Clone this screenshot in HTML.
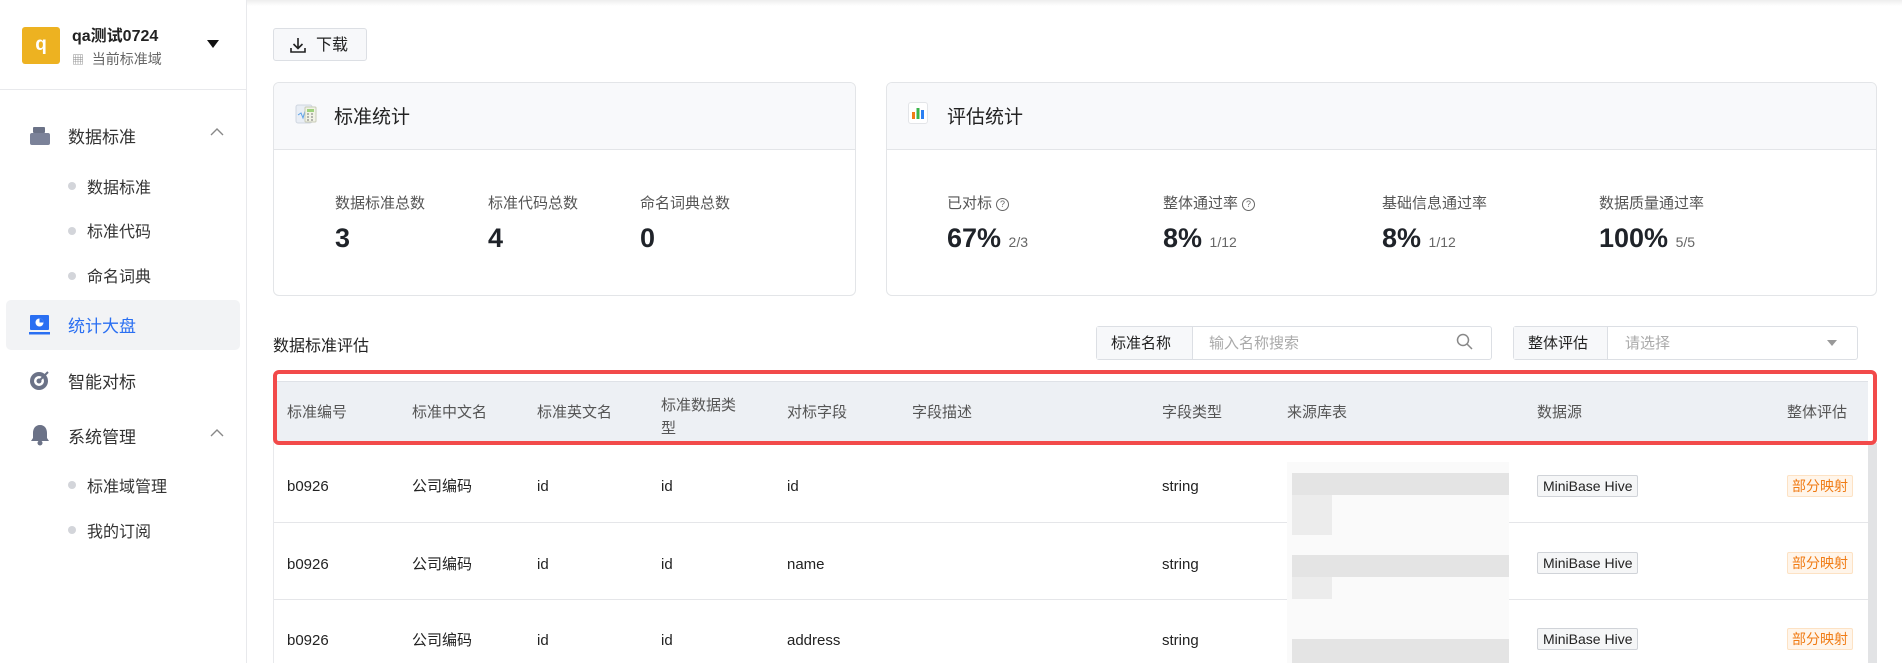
<!DOCTYPE html>
<html><head><meta charset="utf-8"><style>
*{margin:0;padding:0;box-sizing:border-box}
body{width:1902px;height:663px;overflow:hidden;background:#fff;font-family:"Liberation Sans","Noto Sans CJK SC",sans-serif;color:#1f2329;position:relative}
.a{position:absolute;white-space:nowrap}
.side{position:absolute;left:0;top:0;width:247px;height:663px;border-right:1px solid #e8e9ec;background:#fff}
.nav{font-size:17px;color:#333;line-height:20px;margin-top:3px}
.sub{font-size:16px;color:#333;line-height:20px;margin-top:3px}
.dot{position:absolute;width:8px;height:8px;border-radius:50%;background:#d3d5da}
.card{position:absolute;border:1px solid #e3e5e8;border-radius:6px;overflow:hidden;background:#fff}
.card .hd{height:67px;background:#f8f9fb;border-bottom:1px solid #e3e5e8;position:relative}
.lbl{font-size:15px;color:#555;line-height:20px;margin-top:3px}
.num{font-size:27px;font-weight:bold;color:#1f2329;line-height:32px}
.num small{font-size:14px;font-weight:normal;color:#666}
.th{font-size:15px;color:#555;line-height:20px;margin-top:3px}
.td{font-size:15px;color:#222;line-height:20px;margin-top:2px}
.tag{position:absolute;border:1px solid #d0d3d8;background:#f5f6f7;border-radius:2px;font-size:14px;color:#222;padding:0 5px;height:22px;line-height:20px}
.tag2{position:absolute;border:1px solid #fde2c4;background:#fff5ea;border-radius:2px;font-size:14px;color:#f07c15;padding:0 4px;height:22px;line-height:20px}
.q{display:inline-block;width:13px;height:13px;border:1.3px solid #666;border-radius:50%;font-size:9px;line-height:10px;text-align:center;color:#666;vertical-align:1px;margin-left:4px}
</style></head><body>
<div class="a" style="left:0;top:0;width:1902px;height:6px;background:linear-gradient(#eee,#fff)"></div>
<div class="side">
 <div class="a" style="left:22px;top:27px;width:38px;height:37px;background:#edb221;border-radius:3px;color:#fff;font-weight:bold;font-size:19px;text-align:center;line-height:36px">q</div>
 <div class="a" style="left:72px;top:27px;font-size:16px;font-weight:bold;color:#222;line-height:20px">qa测试0724</div>
 <div class="a" style="left:72px;top:49px;font-size:14px;color:#666;line-height:20px"><span style="font-size:12px;color:#888">▦</span>&nbsp; 当前标准域</div>
 <div class="a" style="left:207px;top:40px;width:0;height:0;border-left:6px solid transparent;border-right:6px solid transparent;border-top:8px solid #111"></div>
 <div class="a" style="left:0;top:89px;width:247px;height:1px;background:#e8e9ec"></div>
 <svg class="a" style="left:30px;top:126px" width="20" height="20"><rect x="3" y="1" width="12" height="6" rx="1" fill="#6b7287"/><rect x="0" y="7" width="20" height="12" rx="2" fill="#7b8299"/></svg>
 <div class="a nav" style="left:68px;top:125px">数据标准</div>
 <svg class="a" style="left:210px;top:127px" width="14" height="10"><path d="M1 8 L7 2 L13 8" fill="none" stroke="#888" stroke-width="1.4"/></svg>
 <div class="dot" style="left:68px;top:182px"></div><div class="a sub" style="left:87px;top:176px">数据标准</div>
 <div class="dot" style="left:68px;top:227px"></div><div class="a sub" style="left:87px;top:220px">标准代码</div>
 <div class="dot" style="left:68px;top:272px"></div><div class="a sub" style="left:87px;top:265px">命名词典</div>
 <div class="a" style="left:6px;top:300px;width:234px;height:50px;background:#f2f3f5;border-radius:5px"></div>
 <svg class="a" style="left:29px;top:315px" width="22" height="20"><rect x="1" y="0" width="19" height="15" rx="1" fill="#2a6ff2"/><rect x="0" y="17" width="21" height="2.5" fill="#2a6ff2"/><circle cx="10.5" cy="7.5" r="4" fill="#fff"/><path d="M10.5 7.5 V3.5 A4 4 0 0 1 14.5 7.5Z" fill="#2a6ff2"/></svg>
 <div class="a nav" style="left:68px;top:314px;color:#2a6ff2">统计大盘</div>
 <svg class="a" style="left:29px;top:369px" width="22" height="22"><circle cx="10" cy="12" r="9" fill="#6b7287"/><circle cx="10" cy="12" r="5" fill="#fff"/><circle cx="10" cy="12" r="2.5" fill="#6b7287"/><path d="M10 12 L19 3" stroke="#6b7287" stroke-width="2"/></svg>
 <div class="a nav" style="left:68px;top:370px">智能对标</div>
 <svg class="a" style="left:30px;top:424px" width="20" height="22"><path d="M10 1 C5 1 3 5 3 9 V14 L1 17 H19 L17 14 V9 C17 5 15 1 10 1Z" fill="#6b7287"/><circle cx="10" cy="19" r="2.5" fill="#6b7287"/></svg>
 <div class="a nav" style="left:68px;top:425px">系统管理</div>
 <svg class="a" style="left:210px;top:428px" width="14" height="10"><path d="M1 8 L7 2 L13 8" fill="none" stroke="#888" stroke-width="1.4"/></svg>
 <div class="dot" style="left:68px;top:481px"></div><div class="a sub" style="left:87px;top:475px">标准域管理</div>
 <div class="dot" style="left:68px;top:526px"></div><div class="a sub" style="left:87px;top:520px">我的订阅</div>
</div>

<div class="a" style="left:273px;top:28px;width:94px;height:33px;border:1px solid #dcdfe4;border-radius:3px;background:#f7f8fa"></div>
<svg class="a" style="left:290px;top:37px" width="16" height="16"><path d="M8 1 V11 M3.5 7 L8 11.5 L12.5 7 M1 11 V15 H15 V11" fill="none" stroke="#222" stroke-width="1.6"/></svg>
<div class="a" style="left:316px;top:36px;font-size:16px;color:#222;line-height:20px">下载</div>

<div class="card" style="left:273px;top:82px;width:583px;height:214px"><div class="hd"></div></div>
<svg class="a" style="left:295px;top:103px" width="24" height="22"><rect x="1" y="2" width="16" height="18" rx="2" fill="#e9eef5" stroke="#cfd6e0"/><path d="M3 12 L6 10 L8 15 L10 8" fill="none" stroke="#5aa0e8"/><rect x="10" y="4" width="11" height="15" rx="1" fill="#f1f3e6" stroke="#c8cbb7"/><rect x="12" y="6" width="7" height="3" fill="#9fd27e"/><path d="M12 11h2M16 11h2M12 14h2M16 14h2M12 17h2M16 17h2" stroke="#777"/></svg>
<div class="a" style="left:334px;top:107px;font-size:19px;color:#222;line-height:22px">标准统计</div>
<div class="a lbl" style="left:335px;top:191px">数据标准总数</div><div class="a num" style="left:335px;top:222px">3</div>
<div class="a lbl" style="left:488px;top:191px">标准代码总数</div><div class="a num" style="left:488px;top:222px">4</div>
<div class="a lbl" style="left:640px;top:191px">命名词典总数</div><div class="a num" style="left:640px;top:222px">0</div>

<div class="card" style="left:886px;top:82px;width:991px;height:214px"><div class="hd"></div></div>
<div class="a" style="left:908px;top:102px;width:20px;height:22px;border:1px solid #e3e5e8;border-radius:3px;background:#fff"></div>
<svg class="a" style="left:912px;top:107px" width="12" height="12"><rect x="0" y="5" width="3" height="7" fill="#f07c15"/><rect x="4.5" y="1" width="3" height="11" fill="#3bb54a"/><rect x="9" y="3" width="3" height="9" fill="#2a7ff2"/></svg>
<div class="a" style="left:947px;top:107px;font-size:19px;color:#222;line-height:22px">评估统计</div>
<div class="a lbl" style="left:947px;top:191px">已对标<span class="q">?</span></div>
<div class="a num" style="left:947px;top:222px">67% <small>2/3</small></div>
<div class="a lbl" style="left:1163px;top:191px">整体通过率<span class="q">?</span></div>
<div class="a num" style="left:1163px;top:222px">8% <small>1/12</small></div>
<div class="a lbl" style="left:1382px;top:191px">基础信息通过率</div>
<div class="a num" style="left:1382px;top:222px">8% <small>1/12</small></div>
<div class="a lbl" style="left:1599px;top:191px">数据质量通过率</div>
<div class="a num" style="left:1599px;top:222px">100% <small>5/5</small></div>

<div class="a" style="left:273px;top:337px;font-size:16px;color:#222;line-height:20px">数据标准评估</div>
<div class="a" style="left:1096px;top:326px;width:396px;height:34px;border:1px solid #dcdfe4;border-radius:3px"></div>
<div class="a" style="left:1097px;top:327px;width:96px;height:32px;background:#f7f8fa;border-right:1px solid #dcdfe4"></div>
<div class="a" style="left:1111px;top:334px;font-size:15px;color:#222;line-height:20px">标准名称</div>
<div class="a" style="left:1209px;top:334px;font-size:15px;color:#aaa;line-height:20px">输入名称搜索</div>
<svg class="a" style="left:1456px;top:333px" width="18" height="18"><circle cx="7" cy="7" r="5.5" fill="none" stroke="#888" stroke-width="1.5"/><path d="M11 11 L16 16" stroke="#888" stroke-width="1.5"/></svg>
<div class="a" style="left:1513px;top:326px;width:345px;height:34px;border:1px solid #dcdfe4;border-radius:3px"></div>
<div class="a" style="left:1514px;top:327px;width:94px;height:32px;background:#f7f8fa;border-right:1px solid #dcdfe4"></div>
<div class="a" style="left:1528px;top:334px;font-size:15px;color:#222;line-height:20px">整体评估</div>
<div class="a" style="left:1625px;top:334px;font-size:15px;color:#aaa;line-height:20px">请选择</div>
<div class="a" style="left:1827px;top:340px;border-left:5px solid transparent;border-right:5px solid transparent;border-top:6px solid #999"></div>

<div class="a" style="left:273px;top:380px;width:1595px;height:283px;border-left:1px solid #e8e9ec"></div>
<div class="a" style="left:274px;top:381px;width:1594px;height:62px;background:#edf0f4;border-top:1px solid #dfe2e7"></div>
<div class="a" style="left:1868px;top:443px;width:9px;height:220px;background:#e2e3e5"></div>
<div class="a" style="left:273px;top:370px;width:1604px;height:75px;border:4px solid #f24a4a;border-radius:6px"></div>
<div class="a th" style="left:287px;top:400px">标准编号</div>
<div class="a th" style="left:412px;top:400px">标准中文名</div>
<div class="a th" style="left:537px;top:400px">标准英文名</div>
<div class="a th" style="left:661px;top:391px;line-height:23px;white-space:normal;width:90px">标准数据类<br>型</div>
<div class="a th" style="left:787px;top:400px">对标字段</div>
<div class="a th" style="left:912px;top:400px">字段描述</div>
<div class="a th" style="left:1162px;top:400px">字段类型</div>
<div class="a th" style="left:1287px;top:400px">来源库表</div>
<div class="a th" style="left:1537px;top:400px">数据源</div>
<div class="a th" style="left:1787px;top:400px">整体评估</div>
<div class="a" style="left:274px;top:522px;width:1594px;height:1px;background:#e5e6e9"></div>
<div class="a" style="left:274px;top:599px;width:1594px;height:1px;background:#e5e6e9"></div>
<div class="a" style="left:1287px;top:462px;width:222px;height:201px;background:#fafafa"></div>
<div class="a" style="left:1292px;top:473px;width:217px;height:22px;background:#e4e4e4"></div>
<div class="a" style="left:1292px;top:495px;width:40px;height:40px;background:#ececec"></div>
<div class="a" style="left:1292px;top:555px;width:217px;height:22px;background:#e4e4e4"></div>
<div class="a" style="left:1292px;top:577px;width:40px;height:22px;background:#ececec"></div>
<div class="a" style="left:1292px;top:639px;width:217px;height:24px;background:#e4e4e4"></div>

<div class="a td" style="left:287px;top:475px">b0926</div><div class="a td" style="left:412px;top:475px">公司编码</div><div class="a td" style="left:537px;top:475px">id</div><div class="a td" style="left:661px;top:475px">id</div><div class="a td" style="left:787px;top:475px">id</div><div class="a td" style="left:1162px;top:475px">string</div>
<div class="tag" style="left:1537px;top:475px">MiniBase Hive</div><div class="tag2" style="left:1787px;top:475px">部分映射</div>
<div class="a td" style="left:287px;top:553px">b0926</div><div class="a td" style="left:412px;top:553px">公司编码</div><div class="a td" style="left:537px;top:553px">id</div><div class="a td" style="left:661px;top:553px">id</div><div class="a td" style="left:787px;top:553px">name</div><div class="a td" style="left:1162px;top:553px">string</div>
<div class="tag" style="left:1537px;top:552px">MiniBase Hive</div><div class="tag2" style="left:1787px;top:552px">部分映射</div>
<div class="a td" style="left:287px;top:629px">b0926</div><div class="a td" style="left:412px;top:629px">公司编码</div><div class="a td" style="left:537px;top:629px">id</div><div class="a td" style="left:661px;top:629px">id</div><div class="a td" style="left:787px;top:629px">address</div><div class="a td" style="left:1162px;top:629px">string</div>
<div class="tag" style="left:1537px;top:628px">MiniBase Hive</div><div class="tag2" style="left:1787px;top:628px">部分映射</div>
</body></html>
